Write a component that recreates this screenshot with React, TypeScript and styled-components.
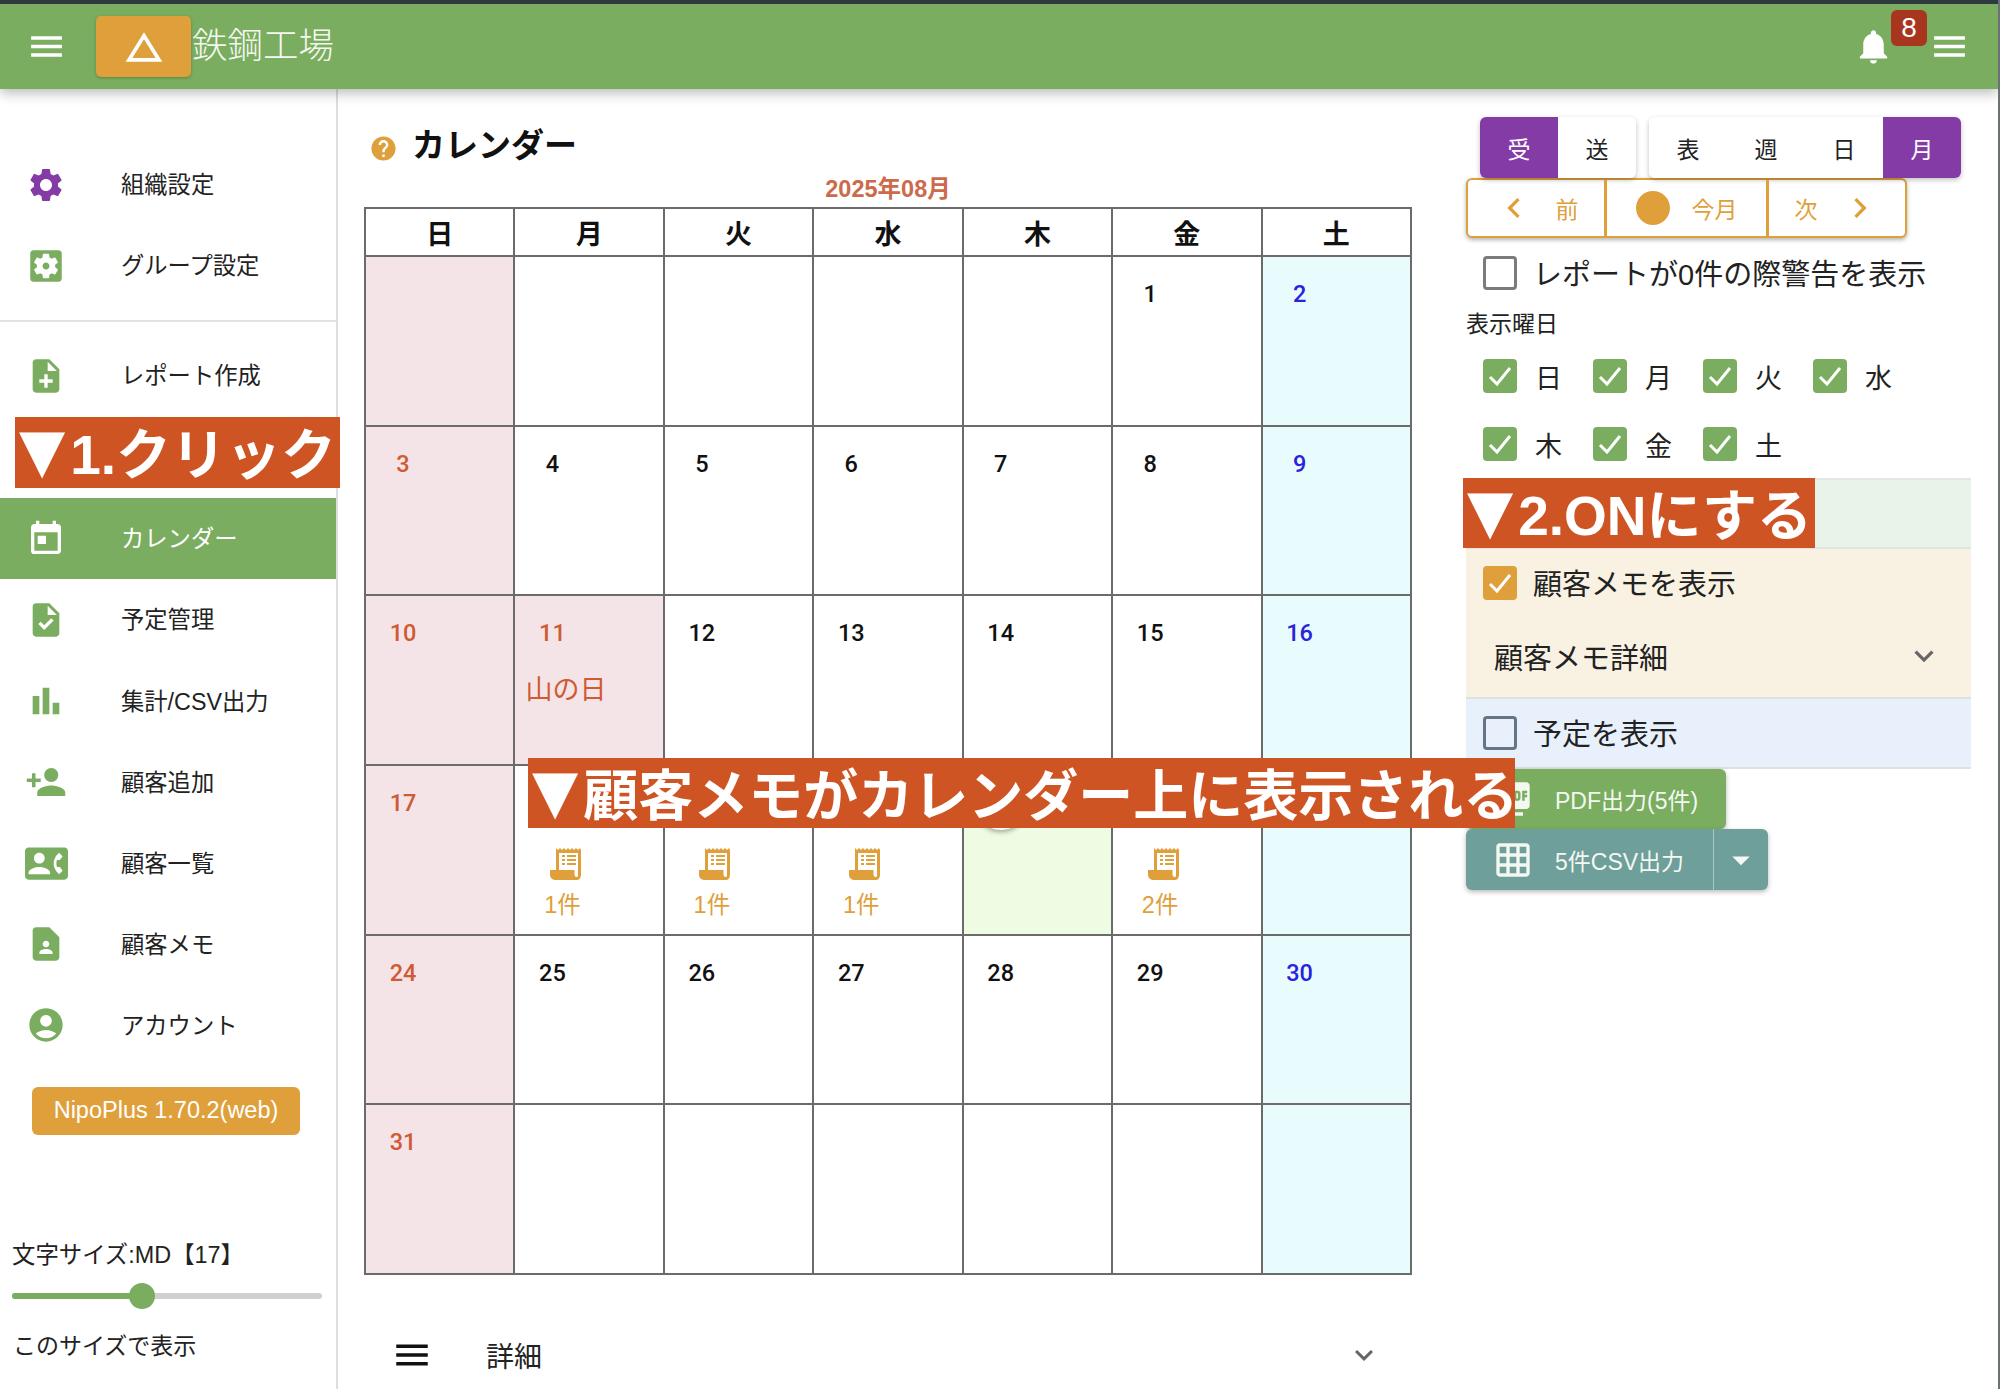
import React from "react";
import styled, { createGlobalStyle } from "styled-components";
import {
  MdAccountCircle,
  MdArrowDropDown,
  MdBarChart,
  MdChangeHistory,
  MdChevronLeft,
  MdChevronRight,
  MdContactPage,
  MdContactPhone,
  MdExpandMore,
  MdGridOn,
  MdHelp,
  MdMenu,
  MdNoteAdd,
  MdNotifications,
  MdPersonAdd,
  MdPictureAsPdf,
  MdSettings,
  MdSettingsApplications,
  MdTask,
  MdToday,
} from "react-icons/md";

const GREEN = "#7aad5f";
const ORANGE = "#dfa03b";
const PURPLE = "#843ba6";
const BANNER = "#cf5424";
const RED = "#cf5a33";
const LINE = "#6b6b6b";

const GlobalStyle = createGlobalStyle`
  html, body {
    margin: 0;
    height: 100%;
    overflow: hidden;
    background: #fff;
  }
  body {
    font-family: "Liberation Sans", "Noto Sans CJK JP", sans-serif;
    color: #222;
  }
  * { box-sizing: border-box; }
`;

const Page = styled.div`
  position: relative;
  height: 1389px;
  border-right: 2px solid #6a7276;
  overflow: hidden;
`;

const Header = styled.header`
  position: relative;
  z-index: 2;
  display: flex;
  align-items: center;
  height: 89px;
  padding: 0 28px 0 26px;
  border-top: 4px solid #2f3a40;
  background: ${GREEN};
  color: #fff;
  box-shadow: 0 4px 12px rgba(0, 0, 0, 0.28);
`;

const Logo = styled.div`
  display: flex;
  align-items: center;
  justify-content: center;
  width: 95px;
  height: 61px;
  margin: 0 1px 0 29px;
  border-radius: 5px;
  background: ${ORANGE};
  box-shadow: 0 1px 3px rgba(0, 0, 0, 0.25);
`;

const Brand = styled.div`
  flex: 1;
  margin-top: -8px;
  font-size: 35.5px;
  font-weight: 300;
  color: #f4f8f0;
`;

const BellWrap = styled.div`
  position: relative;
  display: flex;
  margin-right: 35px;
`;

const Badge = styled.span`
  position: absolute;
  top: -16px;
  left: 38px;
  display: flex;
  align-items: center;
  justify-content: center;
  width: 36px;
  height: 36px;
  border-radius: 6px;
  background: #a8361f;
  font-size: 28px;
`;

const Body = styled.div`
  display: flex;
  height: 1300px;
`;

const Sidebar = styled.aside`
  flex: none;
  width: 338px;
  padding-top: 55px;
  border-right: 2px solid #dedede;
`;

const NavRow = styled.div<{ $active?: boolean; $tone?: string }>`
  display: flex;
  align-items: center;
  height: 81.1px;
  background: ${(p) => (p.$active ? GREEN : "transparent")};
  color: ${(p) => (p.$active ? "#fff" : "#222")};
  font-size: 23.3px;
  svg {
    color: ${(p) => (p.$active ? "#fff" : p.$tone || GREEN)};
  }
`;

const NavIcon = styled.span`
  display: flex;
  justify-content: center;
  flex: none;
  width: 92px;
  margin-right: 29px;
`;

const NavLabel = styled.span`
  margin-bottom: 3px;
`;

const NavDivider = styled.hr`
  height: 2px;
  margin: 14px 0 13px;
  border: 0;
  background: #e2e2e2;
`;

const NavHidden = styled.div`
  height: 82px;
`;

const VersionButton = styled.div`
  display: flex;
  align-items: center;
  justify-content: center;
  width: 268px;
  height: 48px;
  margin: 21px 0 0 32px;
  border-radius: 6px;
  background: ${ORANGE};
  color: #fff;
  font-size: 23.5px;
`;

const SizeLabel = styled.div`
  margin: 104px 0 0 12px;
  font-size: 23.4px;
  line-height: 32px;
`;

const SizeSlider = styled.div`
  position: relative;
  width: 310px;
  height: 6px;
  margin: 22px 0 0 12px;
  border-radius: 3px;
  background: #d0d0d0;
`;

const SizeFill = styled.div`
  height: 100%;
  border-radius: 3px;
  background: ${GREEN};
`;

const SizeThumb = styled.span`
  position: absolute;
  top: -10px;
  width: 26px;
  height: 26px;
  margin-left: -13px;
  border-radius: 50%;
  background: ${GREEN};
`;

const SizeNote = styled.div`
  margin: 31px 0 0 13px;
  font-size: 23px;
  line-height: 32px;
`;

const Main = styled.main`
  display: flex;
  gap: 54px;
  padding-left: 26px;
`;

const CalendarColumn = styled.section`
  flex: none;
  width: 1048px;
  padding-top: 40px;
`;

const TitleRow = styled.div`
  display: flex;
  align-items: center;
  gap: 14px;
  height: 38px;
  padding-left: 5px;
  color: ${ORANGE};
`;

const Title = styled.h1`
  margin: -10px 0 0;
  color: #111;
  font-size: 33px;
  font-weight: 700;
`;

const MonthLabel = styled.div`
  margin: 8px 0 4px;
  color: #cd6a4c;
  font-size: 23.5px;
  font-weight: 700;
  line-height: 28px;
  text-align: center;
`;

const Calendar = styled.div`
  display: grid;
  grid-template-columns: repeat(7, 1fr);
  grid-template-rows: 48px repeat(6, 169.7px);
  border-top: 2px solid ${LINE};
  border-left: 2px solid ${LINE};
`;

const HeadCell = styled.div`
  display: flex;
  align-items: center;
  justify-content: center;
  border-right: 2px solid ${LINE};
  border-bottom: 2px solid ${LINE};
  color: #111;
  font-size: 27px;
  font-weight: 700;
`;

const DayCell = styled.div<{ $bg: string }>`
  display: flex;
  flex-direction: column;
  border-right: 2px solid ${LINE};
  border-bottom: 2px solid ${LINE};
  background: ${(p) => p.$bg};
  min-width: 0;
`;

const DayNumber = styled.div<{ $color: string }>`
  display: flex;
  align-items: center;
  justify-content: center;
  flex: none;
  width: 74px;
  height: 74px;
  color: ${(p) => p.$color};
  font-family: Roboto, "Liberation Sans", sans-serif;
  font-size: 23.5px;
  font-weight: 500;
`;

const TodayMark = styled.span`
  display: flex;
  align-items: center;
  justify-content: center;
  width: 54px;
  height: 54px;
  border-radius: 50%;
  background: #fff;
  box-shadow: 0 2px 5px rgba(0, 0, 0, 0.35);
`;

const Holiday = styled.div`
  margin: 0 0 0 10px;
  color: ${RED};
  font-size: 27px;
  line-height: 40px;
`;

const Memo = styled.div`
  display: flex;
  flex-direction: column;
  align-items: center;
  width: 94px;
  margin-top: 7px;
  color: ${ORANGE};
  font-size: 23.5px;
  line-height: 26px;
`;

const MemoCount = styled.span`
  margin-top: 12px;
`;

const DetailRow = styled.div`
  display: flex;
  align-items: center;
  height: 60px;
  margin-top: 50px;
  padding: 0 30px 0 27px;
  font-size: 28px;
  color: #222;
`;

const DetailText = styled.span`
  flex: 1;
  margin-left: 53px;
`;

const SidePanel = styled.section`
  flex: none;
  width: 505px;
  padding-top: 28px;
`;

const ToggleRow = styled.div`
  display: flex;
  gap: 13px;
  margin-left: 14px;
`;

const ToggleGroup = styled.div`
  display: flex;
  overflow: hidden;
  border-radius: 6px;
  box-shadow: 0 2px 5px rgba(0, 0, 0, 0.25);
`;

const Toggle = styled.div<{ $active?: boolean }>`
  display: flex;
  align-items: center;
  justify-content: center;
  width: 78px;
  height: 61px;
  background: ${(p) => (p.$active ? PURPLE : "#fff")};
  color: ${(p) => (p.$active ? "#fff" : "#222")};
  font-size: 23px;
`;

const MonthNav = styled.div`
  display: grid;
  grid-template-columns: 139px 162px 1fr;
  width: 441px;
  height: 60px;
  border: 2px solid ${ORANGE};
  border-radius: 6px;
  background: #fff;
  box-shadow: 0 2px 4px rgba(0, 0, 0, 0.3);
`;

const MonthNavPart = styled.div<{ $last?: boolean }>`
  display: flex;
  align-items: center;
  justify-content: center;
  gap: 22px;
  border-right: ${(p) => (p.$last ? "0" : `3px solid ${ORANGE}`)};
  color: ${ORANGE};
  font-size: 23px;
`;

const TodayDot = styled.span`
  width: 34px;
  height: 34px;
  border-radius: 50%;
  background: ${ORANGE};
`;

const CheckRow = styled.label<{ $bg?: string; $height?: number }>`
  display: flex;
  align-items: center;
  gap: 16px;
  height: ${(p) => p.$height || 68}px;
  padding-left: 17px;
  background: ${(p) => p.$bg || "transparent"};
  font-size: 29px;
`;

const CheckText = styled.span`
  margin-bottom: 2px;
`;

const Box = styled.span<{ $on?: string; $edge?: string }>`
  display: flex;
  align-items: center;
  justify-content: center;
  flex: none;
  width: 34px;
  height: 34px;
  border-radius: 4px;
  border: ${(p) => (p.$on ? "0" : `3px solid ${p.$edge || "#7b7b7b"}`)};
  background: ${(p) => p.$on || "#fff0"};
`;

const WeekLabel = styled.div`
  height: 32px;
  font-size: 23px;
  line-height: 32px;
`;

const WeekGrid = styled.div`
  display: grid;
  grid-template-columns: repeat(4, 110px);
  grid-auto-rows: 68px;
  margin-top: 2px;
  padding-left: 17px;
`;

const WeekItem = styled.div`
  display: flex;
  align-items: center;
  gap: 18px;
  font-size: 27px;
`;

const Band = styled.div`
  height: 71px;
  border-top: 2px solid #e3e6e3;
  border-bottom: 2px solid #e3e3e3;
  background: #e9f3ea;
`;

const MemoSection = styled.div`
  height: 150px;
  border-bottom: 2px solid #e0e0e0;
  background: #f9f2e2;
`;

const MemoDetail = styled.div`
  display: flex;
  align-items: center;
  justify-content: space-between;
  height: 78px;
  padding: 0 28px;
  font-size: 29px;
  color: #222;
  svg {
    color: #666;
  }
`;

const PlanSection = styled.div`
  border-bottom: 2px solid #e0e0e0;
`;

const ActionButton = styled.div<{ $bg: string; $width: number; $height: number }>`
  display: flex;
  align-items: center;
  width: ${(p) => p.$width}px;
  height: ${(p) => p.$height}px;
  padding-left: 27px;
  border-radius: 6px;
  background: ${(p) => p.$bg};
  color: #f3f8f1;
  font-size: 23px;
  box-shadow: 0 2px 5px rgba(0, 0, 0, 0.28);
`;

const ActionText = styled.span`
  flex: 1;
  margin-left: 22px;
`;

const ActionCaret = styled.span`
  display: flex;
  align-items: center;
  justify-content: center;
  width: 55px;
  height: 100%;
  border-left: 1px solid #a8c8c4;
`;

const Callout = styled.div<{ $left: number; $top: number; $width: number; $height: number }>`
  position: absolute;
  z-index: 3;
  left: ${(p) => p.$left}px;
  top: ${(p) => p.$top}px;
  display: flex;
  align-items: center;
  width: ${(p) => p.$width}px;
  height: ${(p) => p.$height}px;
  padding: 0 0 5px 4px;
  background: ${BANNER};
  color: #fff;
  font-size: 55px;
  font-weight: 700;
  white-space: nowrap;
`;

const CalloutArrow = styled.span`
  margin-right: 5px;
  font-family: "DejaVu Sans", sans-serif;
  font-size: 60px;
  font-weight: 400;
`;

const CheckMark = () => (
  <svg width="26" height="24" viewBox="0 0 26 24" fill="none">
    <path d="M3 13 L10 20 L23 4" stroke="#fff" strokeWidth="3" />
  </svg>
);

const MemoIcon = () => (
  <svg width="32" height="33" viewBox="0 0 32 33" style={{ marginLeft: 7 }}>
    <path
      fill={ORANGE}
      d="M7 33 C2 33 0 31 0 27 L0 23 L6 23 L6 1 L8 3 L10 1 L12 3 L14 1 L16 3 L18 1 L20 3 L22 1 L24 3 L26 1 L28 3 L30 1 L31 3 L31 28 C31 31 29 33 27 33 Z"
    />
    <path fill="#fff" d="M9 6 H28 V28 C28 29.5 27.5 30 27 30 C25 30 24.5 29 24.5 27 V23 H9 Z" />
    <path fill={ORANGE} d="M12 8 H15 V10 H12 Z M17 8 H26 V10 H17 Z M12 12 H15 V14 H12 Z M17 12 H26 V14 H17 Z M12 16 H15 V18 H12 Z M17 16 H26 V18 H17 Z" />
  </svg>
);

interface NavEntry {
  label: string;
  icon: React.ReactNode;
  tone?: string;
  active?: boolean;
}

const topNav: NavEntry[] = [
  { label: "組織設定", icon: <MdSettings size={40} />, tone: PURPLE },
  { label: "グループ設定", icon: <MdSettingsApplications size={42} /> },
];

const mainNav: NavEntry[] = [
  { label: "カレンダー", icon: <MdToday size={40} />, active: true },
  { label: "予定管理", icon: <MdTask size={40} /> },
  { label: "集計/CSV出力", icon: <MdBarChart size={40} /> },
  { label: "顧客追加", icon: <MdPersonAdd size={42} /> },
  { label: "顧客一覧", icon: <MdContactPhone size={43} /> },
  { label: "顧客メモ", icon: <MdContactPage size={40} /> },
  { label: "アカウント", icon: <MdAccountCircle size={40} /> },
];

const NavItem = ({ entry }: { entry: NavEntry }) => (
  <NavRow $active={entry.active} $tone={entry.tone}>
    <NavIcon>{entry.icon}</NavIcon>
    <NavLabel>{entry.label}</NavLabel>
  </NavRow>
);

const weekdays = ["日", "月", "火", "水", "木", "金", "土"];

const days: (number | null)[] = [
  null, null, null, null, null, 1, 2,
  3, 4, 5, 6, 7, 8, 9,
  10, 11, 12, 13, 14, 15, 16,
  17, 18, 19, 20, 21, 22, 23,
  24, 25, 26, 27, 28, 29, 30,
  31, null, null, null, null, null, null,
];

const memoCounts: Record<number, number> = { 18: 1, 19: 1, 20: 1, 22: 2 };

const cellBackground = (day: number | null, column: number) => {
  if (column === 0 || day === 11) return "#f4e4e8";
  if (column === 6) return "#e9fcfd";
  if (day === 21) return "#eefce4";
  return "#fff";
};

const numberColor = (day: number, column: number) => {
  if (column === 0 || day === 11) return RED;
  if (column === 6) return "#2a22dc";
  return "#111";
};

const App = () => {
  return (
    <Page>
      <GlobalStyle />
      <Header>
        <MdMenu size={41} />
        <Logo>
          <MdChangeHistory size={44} />
        </Logo>
        <Brand>鉄鋼工場</Brand>
        <BellWrap>
          <MdNotifications size={41} />
          <Badge>8</Badge>
        </BellWrap>
        <MdMenu size={41} />
      </Header>

      <Body>
        <Sidebar>
          {topNav.map((entry) => (
            <NavItem key={entry.label} entry={entry} />
          ))}
          <NavDivider />
          <NavItem entry={{ label: "レポート作成", icon: <MdNoteAdd size={40} /> }} />
          <NavHidden />
          {mainNav.map((entry) => (
            <NavItem key={entry.label} entry={entry} />
          ))}
          <VersionButton>NipoPlus 1.70.2(web)</VersionButton>
          <SizeLabel>文字サイズ:MD【17】</SizeLabel>
          <SizeSlider>
            <SizeFill style={{ width: "42%" }} />
            <SizeThumb style={{ left: "42%" }} />
          </SizeSlider>
          <SizeNote>このサイズで表示</SizeNote>
        </Sidebar>

        <Main>
          <CalendarColumn>
            <TitleRow>
              <MdHelp size={29} />
              <Title>カレンダー</Title>
            </TitleRow>
            <MonthLabel>2025年08月</MonthLabel>
            <Calendar>
              {weekdays.map((name) => (
                <HeadCell key={name}>{name}</HeadCell>
              ))}
              {days.map((day, index) => {
                const column = index % 7;
                return (
                  <DayCell key={index} $bg={cellBackground(day, column)}>
                    {day !== null && (
                      <DayNumber $color={numberColor(day, column)}>
                        {day === 21 ? <TodayMark>{day}</TodayMark> : day}
                      </DayNumber>
                    )}
                    {day === 11 && <Holiday>山の日</Holiday>}
                    {day !== null && memoCounts[day] && (
                      <Memo>
                        <MemoIcon />
                        <MemoCount>{memoCounts[day]}件</MemoCount>
                      </Memo>
                    )}
                  </DayCell>
                );
              })}
            </Calendar>
            <DetailRow>
              <MdMenu size={42} color="#111" />
              <DetailText>詳細</DetailText>
              <MdExpandMore size={36} color="#666" />
            </DetailRow>
          </CalendarColumn>

          <SidePanel>
            <ToggleRow>
              <ToggleGroup>
                <Toggle $active>受</Toggle>
                <Toggle>送</Toggle>
              </ToggleGroup>
              <ToggleGroup>
                <Toggle>表</Toggle>
                <Toggle>週</Toggle>
                <Toggle>日</Toggle>
                <Toggle $active>月</Toggle>
              </ToggleGroup>
            </ToggleRow>
            <MonthNav>
              <MonthNavPart>
                <MdChevronLeft size={40} />前
              </MonthNavPart>
              <MonthNavPart>
                <TodayDot />今月
              </MonthNavPart>
              <MonthNavPart $last>
                次<MdChevronRight size={40} />
              </MonthNavPart>
            </MonthNav>
            <CheckRow $height={70}>
              <Box />
              <CheckText>レポートが0件の際警告を表示</CheckText>
            </CheckRow>
            <WeekLabel>表示曜日</WeekLabel>
            <WeekGrid>
              {weekdays.map((name) => (
                <WeekItem key={name}>
                  <Box $on={GREEN}>
                    <CheckMark />
                  </Box>
                  {name}
                </WeekItem>
              ))}
            </WeekGrid>
            <Band />
            <MemoSection>
              <CheckRow>
                <Box $on={ORANGE}>
                  <CheckMark />
                </Box>
                <CheckText>顧客メモを表示</CheckText>
              </CheckRow>
              <MemoDetail>
                顧客メモ詳細
                <MdExpandMore size={38} />
              </MemoDetail>
            </MemoSection>
            <PlanSection>
              <CheckRow $bg="#e8f0fb">
                <Box $edge="#667485" />
                <CheckText>予定を表示</CheckText>
              </CheckRow>
            </PlanSection>
            <ActionButton $bg={GREEN} $width={260} $height={60}>
              <MdPictureAsPdf size={40} />
              <ActionText>PDF出力(5件)</ActionText>
            </ActionButton>
            <ActionButton $bg="#6f9f9b" $width={302} $height={61}>
              <MdGridOn size={40} />
              <ActionText>5件CSV出力</ActionText>
              <ActionCaret>
                <MdArrowDropDown size={42} />
              </ActionCaret>
            </ActionButton>
          </SidePanel>
        </Main>
      </Body>

      <Callout $left={15} $top={417} $width={325} $height={71}><CalloutArrow>▼</CalloutArrow>1.クリック</Callout>
      <Callout $left={1463} $top={478} $width={352} $height={70}><CalloutArrow>▼</CalloutArrow>2.ONにする</Callout>
      <Callout $left={528} $top={758} $width={987} $height={70}><CalloutArrow>▼</CalloutArrow>顧客メモがカレンダー上に表示される</Callout>
    </Page>
  );
};

export default App;
